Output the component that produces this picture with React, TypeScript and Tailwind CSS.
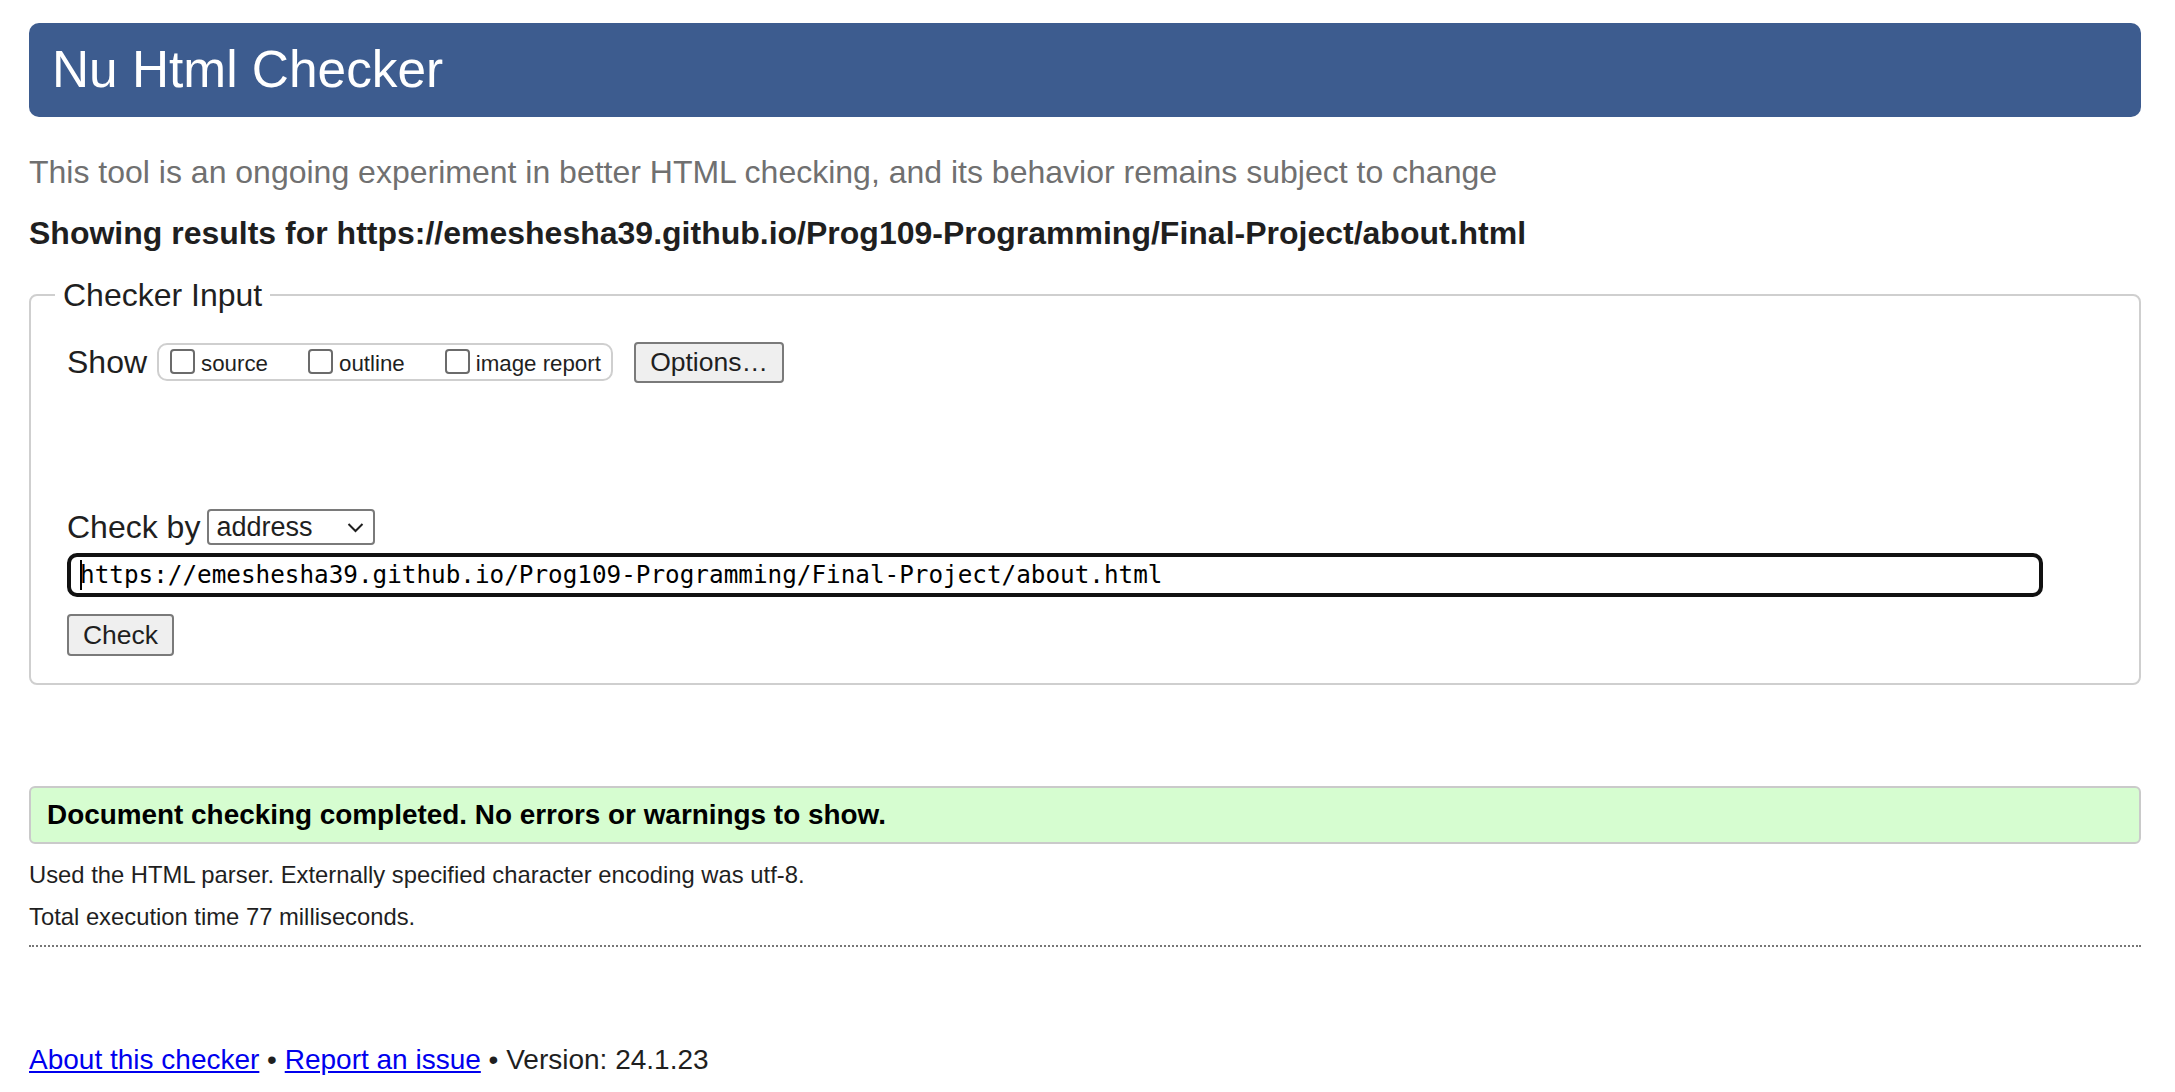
const url = 'https://emeshesha39.github.io/Prog109-Programming/Final-Project/about.html'

function Box({ label }: { label: string }) {
  return (
    <label className="flex items-end">
      <span className="w-[25px] h-[25px] rounded-[4px] border-2 border-[#6b6b6b] bg-white mb-[1px]" />
      <span className="ml-[6px] text-[22.3px] leading-none">{label}</span>
    </label>
  )
}

export default function App() {
  return (
    <div className="min-h-[1092px] bg-white pt-[23px] pl-[29px] pr-[34px] font-['Liberation_Sans',Arial,sans-serif] text-[32px] text-[#1f1f1f]">
      {/* Title bar */}
      <h1 className="h-[94px] rounded-[10px] bg-[#3d5c8f] text-white text-[51.4px] leading-none flex items-center pl-[23px]">
        Nu Html Checker
      </h1>

      <p className="mt-[35px] h-[40px] leading-[40px] text-[#707070]">
        This tool is an ongoing experiment in better HTML checking, and its behavior remains subject to change
      </p>
      <p className="mt-[21px] h-[40px] leading-[40px] font-bold">Showing results for {url}</p>

      {/* Checker input */}
      <fieldset className="mt-[22px] border-2 border-[#cfcfcf] rounded-[8px] pl-[24px] pb-[26px]">
        <legend className="px-[8px] h-[40px] leading-[40px]">Checker Input</legend>
        <div className="pl-[12px] pt-[27px]">
          <div className="h-[40px] flex items-center">
            <span>Show</span>
            <div className="ml-[10px] h-[38px] w-[456px] rounded-[10px] border-2 border-[#cfcfcf] flex items-center pl-[11px] gap-[40px]">
              <Box label="source" />
              <Box label="outline" />
              <Box label="image report" />
            </div>
            <button className="ml-[21px] h-[41px] w-[150px] rounded-[4px] border-2 border-[#7a7a7a] bg-[#efefef] text-[26.5px] leading-none">
              Options…
            </button>
          </div>

          <div className="mt-[125px] h-[40px] flex items-center">
            <span>Check by</span>
            <div className="ml-[7px] h-[36px] w-[168px] rounded-[4px] border-2 border-[#7a7a7a] flex items-center pl-[7px] pr-[9px] justify-between">
              <span className="text-[27px] leading-none">address</span>
              <svg width="17" height="11" viewBox="0 0 17 11" fill="none" stroke="#1f1f1f" strokeWidth="2">
                <path d="M1.5 2l7 7 7-7" />
              </svg>
            </div>
          </div>

          <div className="mt-[6px] h-[44px] w-[1976px] rounded-[10px] border-[4px] border-[#111] flex items-center pl-[9px]">
            <span className="w-[2px] h-[30px] bg-black -mr-[2px]" />
            <span className="font-['DejaVu_Sans_Mono',monospace] text-[24.3px] leading-none text-black">{url}</span>
          </div>

          <button className="mt-[17px] h-[42px] w-[107px] rounded-[4px] border-2 border-[#7a7a7a] bg-[#efefef] text-[26.5px] leading-none">
            Check
          </button>
        </div>
      </fieldset>

      {/* Result */}
      <div className="mt-[101px] h-[58px] rounded-[6px] border-2 border-[#cacaca] bg-[#d6fdd0] flex items-center pl-[16px] font-bold text-[27.9px] text-black">
        Document checking completed. No errors or warnings to show.
      </div>
      <p className="mt-[16px] h-[30px] leading-[30px] text-[23.8px]">
        Used the HTML parser. Externally specified character encoding was utf-8.
      </p>
      <p className="mt-[12px] h-[30px] leading-[30px] text-[23.8px]">Total execution time 77 milliseconds.</p>
      <div className="mt-[13px] border-t-2 border-dotted border-[#777]" />

      {/* Footer */}
      <p className="mt-[95px] h-[36px] leading-[36px] text-[28px]">
        <a className="text-[#0000ee] underline">About this checker</a> •{' '}
        <a className="text-[#0000ee] underline">Report an issue</a> • Version: 24.1.23
      </p>
    </div>
  )
}
